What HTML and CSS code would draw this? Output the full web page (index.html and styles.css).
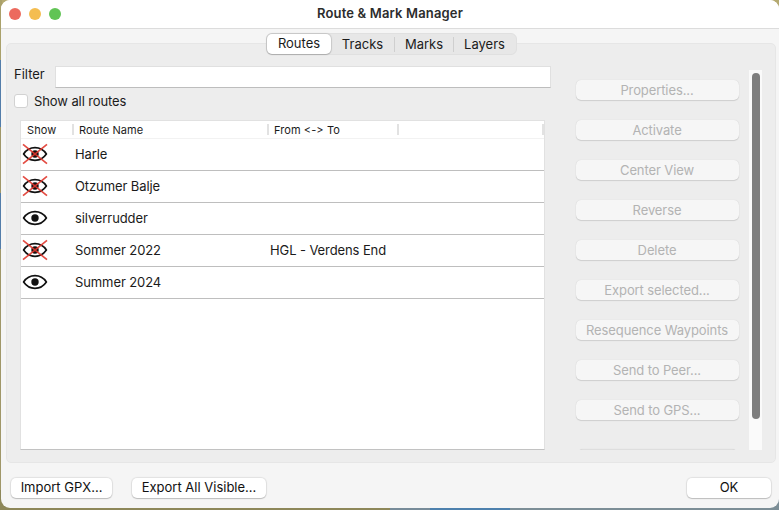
FILE: index.html
```html
<!DOCTYPE html>
<html lang="en">
<head>
<meta charset="utf-8">
<title>Route &amp; Mark Manager</title>
<link rel="stylesheet" href="styles.css">
</head>
<body>
<svg class="defs" width="0" height="0" aria-hidden="true">
  <symbol id="eye" viewBox="0 0 26 22">
    <path d="M1.600 11C4.600 6.600 8.500 4.700 13 4.700S21.400 6.600 24.400 11C21.400 15.400 17.500 17.300 13 17.300S4.600 15.400 1.600 11Z" fill="#fff" stroke="#111" stroke-width="1.700" stroke-linejoin="round"/>
    <circle cx="13" cy="11" r="3.700" fill="#111"/>
  </symbol>
  <symbol id="eye-off" viewBox="0 0 26 22">
    <use href="#eye"/>
    <path d="M1 1.300L25 20.700M25 1.300L1 20.700" stroke="#e0392f" stroke-width="1.700" stroke-opacity=".9" fill="none"/>
  </symbol>
</svg>
<div class="window">
  <header class="titlebar">
    <div class="lights"><i class="light red"></i><i class="light yellow"></i><i class="light green"></i></div>
    <h1 class="title">Route &amp; Mark Manager</h1>
  </header>
  <main class="panel">
    <nav class="tabs">
      <span class="tab active">Routes</span><span class="tab tracks">Tracks</span><span class="tab marks">Marks</span><span class="tab layers">Layers</span>
    </nav>
    <section class="list">
      <div class="filter"><label class="filter-label" for="filter">Filter</label><input class="filter-input" id="filter" type="text"></div>
      <div class="show-all"><span class="checkbox"></span><span class="show-all-label">Show all routes</span></div>
      <div class="table">
        <div class="thead"><span>Show</span><span>Route Name</span><span>From &lt;-&gt; To</span><span></span></div>
        <div class="row"><svg class="eye"><use href="#eye-off"/></svg><span>Harle</span><span></span></div>
        <div class="row"><svg class="eye"><use href="#eye-off"/></svg><span>Otzumer Balje</span><span></span></div>
        <div class="row"><svg class="eye"><use href="#eye"/></svg><span>silverrudder</span><span></span></div>
        <div class="row"><svg class="eye"><use href="#eye-off"/></svg><span>Sommer 2022</span><span class="from">HGL - Verdens End</span></div>
        <div class="row"><svg class="eye"><use href="#eye"/></svg><span>Summer 2024</span><span></span></div>
      </div>
    </section>
    <aside class="actions">
      <span class="btn off">Properties...</span>
      <span class="btn off">Activate</span>
      <span class="btn off">Center View</span>
      <span class="btn off">Reverse</span>
      <span class="btn off">Delete</span>
      <span class="btn off">Export selected...</span>
      <span class="btn off">Resequence Waypoints</span>
      <span class="btn off">Send to Peer...</span>
      <span class="btn off">Send to GPS...</span>
      <span class="btn off clipped"></span>
    </aside>
    <div class="scrollbar"><div class="thumb"></div></div>
  </main>
  <footer class="footer">
    <span class="btn import">Import GPX...</span>
    <span class="btn export">Export All Visible...</span>
    <span class="btn ok">OK</span>
  </footer>
</div>
</body>
</html>
```
FILE: styles.css
```css
* { box-sizing: border-box; }
html, body { height: 100%; }
body {
  margin: 0;
  padding-left: 1px;
  overflow: hidden;
  font: 13px/16px Inter, "Liberation Sans", sans-serif;
  font-feature-settings: "calt" 0;
  letter-spacing: -0.1px;
  color: #1b1b1b;
  background:
    linear-gradient(90deg, #8d8759 0 390px, #778b99 390px 430px, #4d80ad 430px 510px, #7c8e96 510px) 0 100% / 100% 20px no-repeat,
    linear-gradient(#aaa16b 0 60px, #537daa 60px 127px, #a09769 127px 193px, #537daa 193px 249px, #a09769 249px) 0 0 / 2px 100% no-repeat,
    #b5aa71;
}
.defs { position: absolute; }
.window {
  height: 508px;
  display: flex;
  flex-direction: column;
  background: #f5f5f5;
  border-radius: 9px;
  overflow: hidden;
}
.titlebar {
  height: 29px;
  flex: none;
  display: grid;
  grid-template-columns: 80px 1fr 80px;
  align-items: center;
  background: #fff;
  border-bottom: 1px solid #dcdcdc;
}
.lights { display: flex; gap: 8px; padding-left: 8px; }
.light { width: 12px; height: 12px; border-radius: 50%; }
.red { background: #ec6a5e; }
.yellow { background: #f4bd50; }
.green { background: #61c455; }
.title {
  margin: 0 0 2px;
  font-size: 13px;
  font-weight: 600;
  text-align: center;
  letter-spacing: 0.16px;
  color: #2c2c2c;
}
.panel {
  margin: 14px 3px 0 5px;
  height: 420px;
  flex: none;
  display: grid;
  grid-template-columns: 569px 163px 10px 13px;
  grid-template-rows: 12px 1fr;
  background: #ededed;
  border: 1px solid #e6e6e6;
  border-radius: 5px;
}
.tabs {
  grid-column: 1 / -1;
  justify-self: start;
  display: flex;
  align-items: center;
  width: 251px;
  height: 22px;
  margin: -11px 0 0 259px;
  background: #e7e7e7;
  border: 1px solid #e0e0e0;
  border-radius: 6px;
  letter-spacing: 0;
}
.tab { text-align: center; line-height: 14px; padding-bottom: 1px; }
.tab.active {
  width: 64px;
  height: 20px;
  line-height: 18px;
  background: #fff;
  border-radius: 5px;
  box-shadow: 0 0 1px 1px #0000001f, 0 1px 1px #00000022;
}
.tracks { width: 63px; }
.marks { width: 60px; border: solid #cfcfcf; border-width: 0 1px; }
.layers { width: 61px; }
.list { padding-top: 9px; }
.filter { display: flex; height: 23px; padding-left: 7px; }
.filter-label { width: 41px; line-height: 18px; letter-spacing: 0; }
.filter-input {
  width: 496px;
  height: 22px;
  margin-top: 1px;
  padding: 0 6px;
  background: #fff;
  border: 1px solid #e0e0e0;
  border-bottom-color: #bdbdbd;
}
.show-all { display: flex; align-items: center; gap: 6px; height: 16px; margin-top: 5px; padding-left: 7px; }
.checkbox {
  width: 14px;
  height: 14px;
  background: #fff;
  border: 1px solid #d2d2d2;
  border-radius: 3px;
}
.table {
  width: 525px;
  height: 330px;
  margin: 11px 0 0 13px;
  background: #fff;
  border: 1px solid #e1e1e1;
  border-bottom-color: #c2c2c2;
}
.thead {
  display: grid;
  grid-template-columns: 53px 195px 130px 1fr;
  height: 18px;
  align-items: center;
  font-size: 11px;
  letter-spacing: 0.08px;
  border-bottom: 1px solid #f2f2f2;
}
.thead span { height: 11px; line-height: 12px; padding-left: 5px; border-right: 2px solid #e2e2e2; }
.thead span:first-child { padding-left: 6px; }
.row {
  display: grid;
  grid-template-columns: 54px 195px 1fr;
  align-items: center;
  height: 32px;
  padding-bottom: 1px;
  border-bottom: 1px solid #bebebe;
}
.eye { width: 26px; height: 22px; margin-left: 1px; }
.actions {
  height: 394px;
  padding: 24px 2px 0;
  margin: 0 -2px;
  display: flex;
  flex-direction: column;
  gap: 20px;
  overflow: hidden;
}
.btn {
  flex: none;
  height: 20px;
  line-height: 19px;
  text-align: center;
  white-space: nowrap;
  color: #111;
  background: #fff;
  border-radius: 5px;
  box-shadow: 0 0 1px 1px #00000014, 0 1px 1px #0000002b;
}
.off { padding-right: 1px; line-height: 20px; letter-spacing: -0.1px; color: #b3b3b3; background: #f6f6f6; box-shadow: 0 0 1px #00000026, 0 1px 1px #0000001f; }
.clipped { margin: 9px 2px 0; background: #dedede; }
.scrollbar { grid-column: 4; height: 380px; margin-top: 14px; padding: 3px 2px; background: #fafafa; }
.thumb { width: 8px; height: 346px; margin-left: 1px; border-radius: 4px; background: #7e7e7e; }
.footer { display: flex; padding: 15px 8px 0 10px; letter-spacing: 0; }
.import { width: 101px; }
.export { width: 134px; margin-left: 20px; }
.ok { width: 84px; margin-left: auto; }
```
